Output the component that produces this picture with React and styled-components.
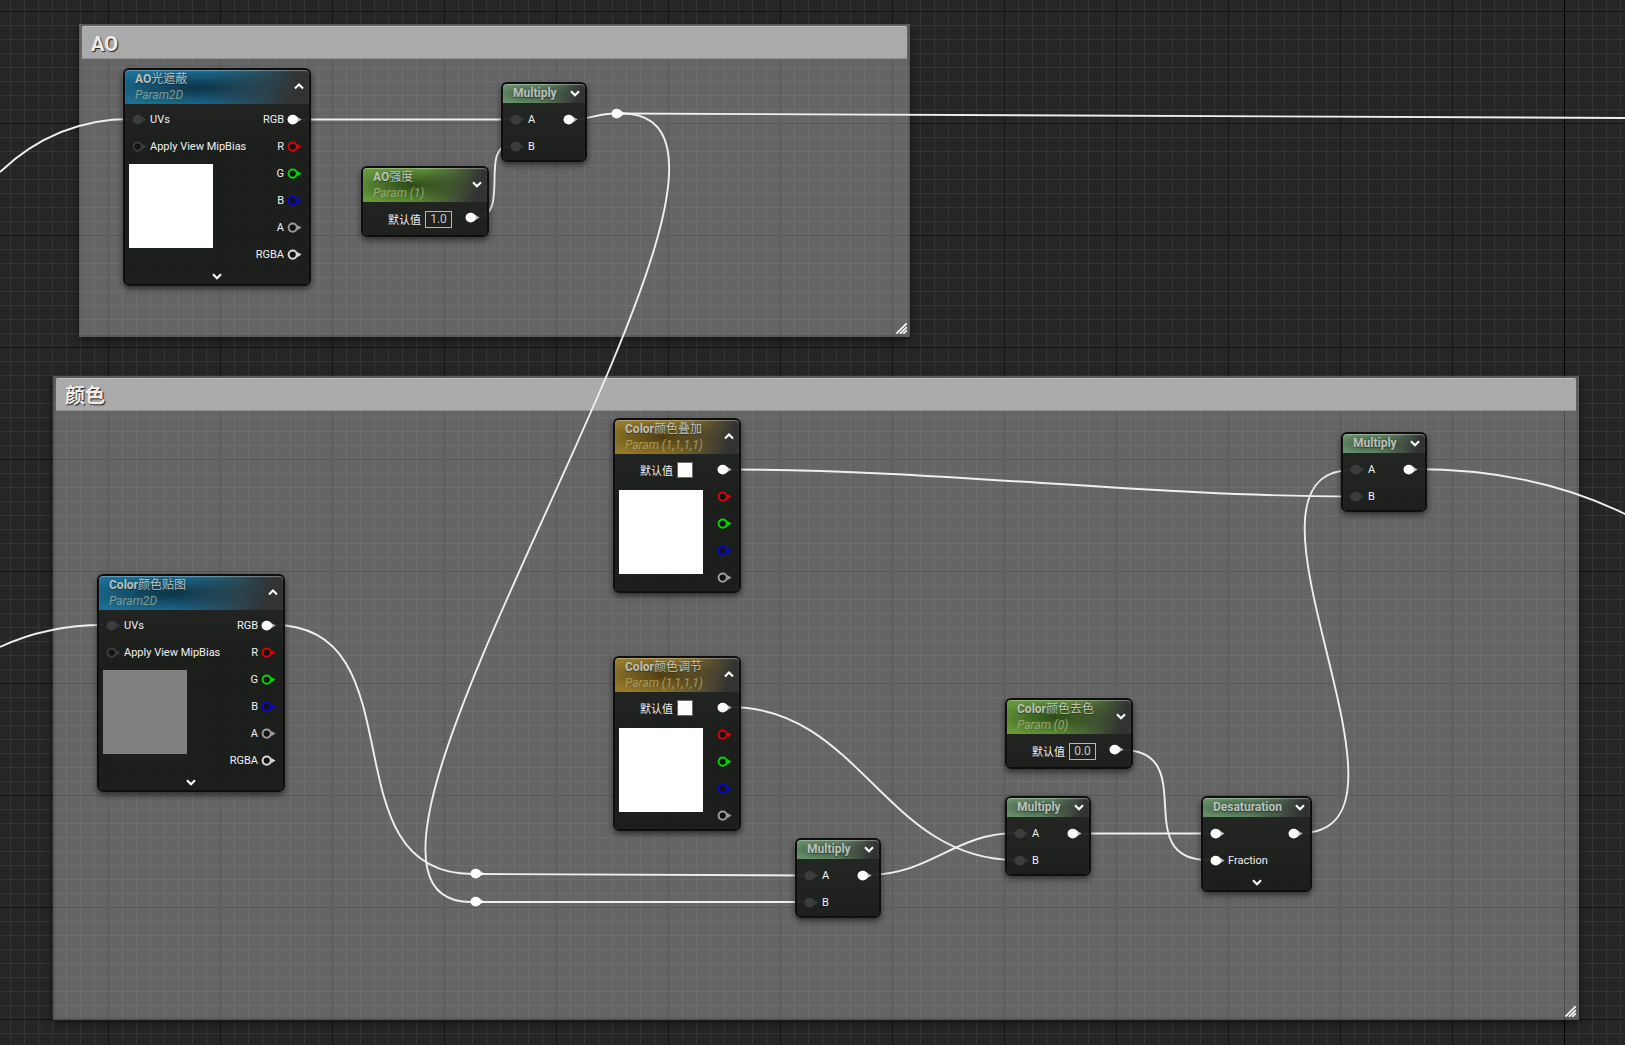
import React from "react";
import styled, { createGlobalStyle } from "styled-components";

const HEADS = {
  texture: { base: "#1b6e94", dark: "#0e3245", sub: "#7c9c8c" },
  scalar: { base: "#65983a", dark: "#2c4a16", sub: "#98a86c" },
  vector: { base: "#957a2a", dark: "#4d3c12", sub: "#aa9a58" },
  math: { base: "#66906a", dark: "#3a533c", sub: "#999999" },
};

const CHANNELS = [
  { label: "RGB", color: "#ffffff", filled: true },
  { label: "R", color: "#d40606" },
  { label: "G", color: "#06d406" },
  { label: "B", color: "#0808c8" },
  { label: "A", color: "#9c9c9c" },
  { label: "RGBA", color: "#d8d8d8" },
];

const IDLE = "#3c3c3c";
const AB_INPUTS = [
  { label: "A", color: IDLE, filled: true },
  { label: "B", color: IDLE, filled: true },
];
const TEXTURE_INPUTS = [
  { label: "UVs", color: IDLE, filled: true },
  { label: "Apply View MipBias", color: IDLE },
];
const OUT = [{ color: "#ffffff", filled: true }];
const VECTOR_OUT = CHANNELS.slice(0, 5).map(({ color, filled }) => ({ color, filled }));

const COMMENTS = [
  { title: "AO", x: 79, y: 24, w: 831, h: 313 },
  { title: "颜色", x: 53, y: 376, w: 1526, h: 644 },
];

const NODES = [
  { id: "ao-tex", kind: "texture", x: 123, y: 68, w: 188, name: "AO", cjk: "光遮蔽", sub: "Param2D", inputs: TEXTURE_INPUTS, outputs: CHANNELS, preview: "#ffffff", open: true, expander: true },
  { id: "ao-mul", kind: "math", x: 501, y: 82, w: 86, name: "Multiply", inputs: AB_INPUTS, outputs: OUT },
  { id: "ao-value", kind: "scalar", x: 361, y: 166, w: 128, name: "AO", cjk: "强度", sub: "Param (1)", value: "1.0", outputs: OUT },
  { id: "tint-over", kind: "vector", x: 613, y: 418, w: 128, name: "Color", cjk: "颜色叠加", sub: "Param (1,1,1,1)", swatch: true, outputs: VECTOR_OUT, preview: "#ffffff", open: true },
  { id: "tint-adjust", kind: "vector", x: 613, y: 656, w: 128, name: "Color", cjk: "颜色调节", sub: "Param (1,1,1,1)", swatch: true, outputs: VECTOR_OUT, preview: "#ffffff", open: true },
  { id: "color-tex", kind: "texture", x: 97, y: 574, w: 188, name: "Color", cjk: "颜色贴图", sub: "Param2D", inputs: TEXTURE_INPUTS, outputs: CHANNELS, preview: "#808080", open: true, expander: true },
  { id: "desat-value", kind: "scalar", x: 1005, y: 698, w: 128, name: "Color", cjk: "颜色去色", sub: "Param (0)", value: "0.0", outputs: OUT },
  { id: "mul-tex", kind: "math", x: 795, y: 838, w: 86, name: "Multiply", inputs: AB_INPUTS, outputs: OUT },
  { id: "mul-adjust", kind: "math", x: 1005, y: 796, w: 86, name: "Multiply", inputs: AB_INPUTS, outputs: OUT },
  {
    id: "desat", kind: "math", x: 1201, y: 796, w: 111, name: "Desaturation", expander: true,
    inputs: [{ color: "#ffffff", filled: true }, { label: "Fraction", color: "#ffffff", filled: true }],
    outputs: OUT,
  },
  { id: "mul-final", kind: "math", x: 1341, y: 432, w: 86, name: "Multiply", inputs: AB_INPUTS, outputs: OUT },
];

const REROUTES = [
  { x: 611, y: 108 },
  { x: 470, y: 868 },
  { x: 470, y: 896 },
];

const WIRES = [
  "M0 172 C38 136 82 119 130 119",
  "M300 119.5 H512",
  "M477 217 C510 217 480 146 509 146",
  "M574 119 C592 119 598 113.5 614 113.5",
  "M618 113.5 L1625 118",
  "M1625 118 L4000 130",
  "M622 113.5 C831 113.5 266 902 471 902",
  "M1414 469 C1490 469 1560 482 1625 514 C1690 546 1750 600 1800 660",
  "M730 469.5 C938 469.5 1147 496.5 1355 496.5",
  "M0 647 C32 632 66 625 104 625",
  "M274 625 C421 625 325 874 472 874",
  "M478 874 L806 875.5",
  "M478 902 H806",
  "M868 875 C930 875 955 833 1016 833",
  "M730 707 C860 707 885 860 1016 860",
  "M1078 833.5 H1212",
  "M1122 750 C1202 750 1128 860 1208 860",
  "M1301 833 C1441 833 1212 470 1352 470",
];

function Pin({ color, filled }) {
  return (
    <PinIcon width="15" height="12" viewBox="0 0 15 12" aria-hidden="true">
      {filled ? (
        <>
          <path d="M9 2.2 L14.6 5.6 L9 9 Z" fill={color} opacity="0.7" />
          <ellipse cx="5.7" cy="5.6" rx="5.2" ry="4.9" fill={color} />
        </>
      ) : (
        <>
          <circle cx="5.7" cy="5.6" r="4.1" fill="#121212" stroke={color} strokeWidth="2" />
          <path d="M10.2 3 L14.6 5.6 L10.2 8.2 Z" fill={color} />
        </>
      )}
    </PinIcon>
  );
}

function Chevron({ up }) {
  return (
    <svg width="10" height="7" viewBox="0 0 10 7" aria-hidden="true">
      <path
        d={up ? "M1 5.6 L5 1.6 L9 5.6" : "M1 1.2 L5 5.2 L9 1.2"}
        fill="none"
        stroke="#fff"
        strokeWidth="2.1"
      />
    </svg>
  );
}

function GraphNode({ node }) {
  const { id, kind, name, cjk, sub, open, inputs = [], outputs } = node;
  const hasDefault = node.value || node.swatch;

  return (
    <NodeBox $x={node.x} $y={node.y} $w={node.w}>
      <NodeHeader $tone={HEADS[kind]} $tall={!!sub}>
        <div>
          <NodeTitle>
            {name}
            {cjk && <span>{cjk}</span>}
          </NodeTitle>
          {sub && <NodeSub $color={HEADS[kind].sub}>{sub}</NodeSub>}
        </div>
        <IconButton aria-label={`Toggle ${name} preview`}>
          <Chevron up={open} />
        </IconButton>
      </NodeHeader>

      <NodeBody $tall={!!sub} $pad={!!node.value}>
        <PinColumn>
          {inputs.map((pin, i) => (
            <PinRow key={i}>
              <Pin {...pin} />
              {pin.label}
            </PinRow>
          ))}
          {hasDefault && (
            <DefaultRow $lower={!!node.value}>
              <label htmlFor={id}>默认值</label>
              {node.value ? (
                <ValueInput id={id} defaultValue={node.value} />
              ) : (
                <Swatch id={id} type="button" />
              )}
            </DefaultRow>
          )}
          {node.preview && <Preview $color={node.preview} $gap={hasDefault ? 7 : 4} />}
        </PinColumn>
        <PinColumn $right>
          {outputs.map((pin, i) => (
            <PinRow key={i} $right>
              {pin.label}
              <Pin {...pin} />
            </PinRow>
          ))}
        </PinColumn>
      </NodeBody>

      {node.expander && (
        <Expander aria-label={`Show ${name} options`}>
          <Chevron />
        </Expander>
      )}
    </NodeBox>
  );
}

function App() {
  return (
    <>
      <GlobalStyle />
      <Canvas>
        {COMMENTS.map((c) => (
          <Comment key={c.title} $x={c.x} $y={c.y} $w={c.w} $h={c.h}>
            <CommentTitle>{c.title}</CommentTitle>
            <ResizeGrip width="11" height="11" viewBox="0 0 11 11" aria-hidden="true">
              <path d="M0.5 10.5 L10.8 0.2 M4 10.8 L10.8 4 M7.3 10.8 L10.8 7.3" stroke="#fff" strokeWidth="1.6" />
            </ResizeGrip>
          </Comment>
        ))}

        <WireLayer aria-hidden="true">
          {WIRES.map((d) => (
            <path key={d} d={d} />
          ))}
        </WireLayer>

        {REROUTES.map((r) => (
          <Reroute key={`${r.x}-${r.y}`} $x={r.x} $y={r.y}>
            <Pin color="#ffffff" filled />
          </Reroute>
        ))}

        {NODES.map((node) => (
          <GraphNode key={node.id} node={node} />
        ))}
      </Canvas>
    </>
  );
}

const GlobalStyle = createGlobalStyle`
  * {
    box-sizing: border-box;
  }

  body {
    margin: 0;
    background: #262626;
    font-family: Roboto, "Noto Sans CJK SC", sans-serif;
  }
`;

/* Graph paper: 14px cells, a dark line every 8 cells, black axis */
const Canvas = styled.main`
  position: relative;
  width: 100%;
  height: 100vh;
  overflow: hidden;
  background-color: #262626;
  background-image:
    linear-gradient(#000, #000),
    linear-gradient(90deg, #151515 1px, transparent 1px),
    linear-gradient(#151515 1px, transparent 1px),
    linear-gradient(90deg, #353535 1px, transparent 1px),
    linear-gradient(#353535 1px, transparent 1px);
  background-size: 1px 100%, 112px 112px, 112px 112px, 14px 14px, 14px 14px;
  background-position: 1564px 0, 108px 0, 0 11px, 10px 0, 0 11px;
  background-repeat: no-repeat, repeat, repeat, repeat, repeat;
`;

const Comment = styled.section`
  position: absolute;
  left: ${(p) => p.$x}px;
  top: ${(p) => p.$y}px;
  width: ${(p) => p.$w}px;
  height: ${(p) => p.$h}px;
  padding: 2px 3px;
  background: rgba(255, 255, 255, 0.29);
  box-shadow: 0 3px 8px rgba(0, 0, 0, 0.5), inset 0 0 2px 2px rgba(60, 60, 60, 0.3);
`;

const CommentTitle = styled.h2`
  height: 33px;
  margin: 0;
  padding: 1px 9px 0;
  border-top: 1px solid #bdbdbd;
  border-bottom: 1px solid #8f8f8f;
  border-radius: 2px 2px 0 0;
  background: #aaaaaa;
  color: #ececec;
  font-size: 20px;
  font-weight: 700;
  line-height: 32px;
  text-shadow: 1px 1px 1px #1c1c1c;

  &:lang(zh) {
    font-weight: 500;
  }
`;

const ResizeGrip = styled.svg`
  position: absolute;
  right: 3px;
  bottom: 3px;
`;

const WireLayer = styled.svg`
  position: absolute;
  inset: 0;
  width: 100%;
  height: 100%;
  pointer-events: none;
  fill: none;
  stroke: #efefef;
  stroke-width: 1.9;
`;

const Reroute = styled.div`
  position: absolute;
  left: ${(p) => p.$x}px;
  top: ${(p) => p.$y}px;
  display: flex;
`;

const NodeBox = styled.article`
  position: absolute;
  left: ${(p) => p.$x}px;
  top: ${(p) => p.$y}px;
  width: ${(p) => p.$w}px;
  border: 2px solid #0e0e0e;
  border-radius: 6px;
  background: linear-gradient(rgba(34, 36, 34, 0.94), rgba(24, 26, 24, 0.94) 80px);
  background-clip: padding-box;
  box-shadow: 0 3px 6px rgba(0, 0, 0, 0.55);
  color: #f0f0f0;
  font-size: 11px;
`;

const NodeHeader = styled.header`
  display: flex;
  align-items: flex-start;
  justify-content: space-between;
  height: ${(p) => (p.$tall ? 34 : 19)}px;
  padding: 1px 5px 0 10px;
  border-radius: 4px 4px 0 0;
  box-shadow: inset 0 1px 1px rgba(255, 255, 255, 0.35);
  background:
    linear-gradient(110deg, transparent 45%, #323332 90%),
    radial-gradient(ellipse 50% 55% at 40% 52%, ${(p) => p.$tone.dark}, transparent),
    ${(p) => p.$tone.base};

  button {
    margin-top: ${(p) => (p.$tall ? 7 : 0)}px;
  }
`;

const NodeTitle = styled.h3`
  margin: 0;
  color: #bcc0bd;
  font-size: 12px;
  font-weight: 700;
  line-height: 16px;
  white-space: nowrap;
  text-shadow: 0 1px 1px rgba(0, 0, 0, 0.4);

  span {
    font-weight: 400;
  }
`;

const NodeSub = styled.p`
  margin: 0;
  color: ${(p) => p.$color};
  font-size: 12px;
  font-style: italic;
  line-height: 16px;
  white-space: nowrap;
`;

const IconButton = styled.button`
  display: flex;
  align-items: center;
  justify-content: center;
  width: 10px;
  height: 16px;
  padding: 0;
  border: none;
  background: transparent;
  cursor: pointer;
`;

const NodeBody = styled.div`
  display: flex;
  justify-content: space-between;
  padding-top: ${(p) => (p.$tall ? 2 : 3)}px;
  padding-bottom: ${(p) => (p.$pad ? 4 : 0)}px;
`;

const PinColumn = styled.div`
  display: flex;
  flex-direction: column;
  align-items: ${(p) => (p.$right ? "flex-end" : "flex-start")};
  padding-right: ${(p) => (p.$right ? 7 : 0)}px;
`;

const PinRow = styled.div`
  display: flex;
  align-items: center;
  gap: 3px;
  height: 27px;
  padding-left: ${(p) => (p.$right ? 0 : 7)}px;
  line-height: 16px;
  white-space: nowrap;
`;

const PinIcon = styled.svg`
  flex: none;
`;

const DefaultRow = styled.div`
  display: flex;
  align-items: center;
  gap: 4px;
  height: 27px;
  padding: ${(p) => (p.$lower ? 3 : 1)}px 0 0 25px;
`;

const ValueInput = styled.input`
  width: 27px;
  height: 17px;
  padding: 0;
  border: 1px solid #b8b8b8;
  background: transparent;
  color: #c8c8c8;
  font: 12px Roboto, sans-serif;
  text-align: center;
  outline: none;
`;

const Swatch = styled.button`
  width: 16px;
  height: 16px;
  padding: 0;
  border: 1px solid #6a6a6a;
  background: #fff;
  cursor: pointer;
`;

const Preview = styled.div`
  width: 84px;
  height: 84px;
  margin: ${(p) => p.$gap}px 0 0 4px;
  background: ${(p) => p.$color};
`;

const Expander = styled(IconButton)`
  width: 100%;
`;

export default App;
